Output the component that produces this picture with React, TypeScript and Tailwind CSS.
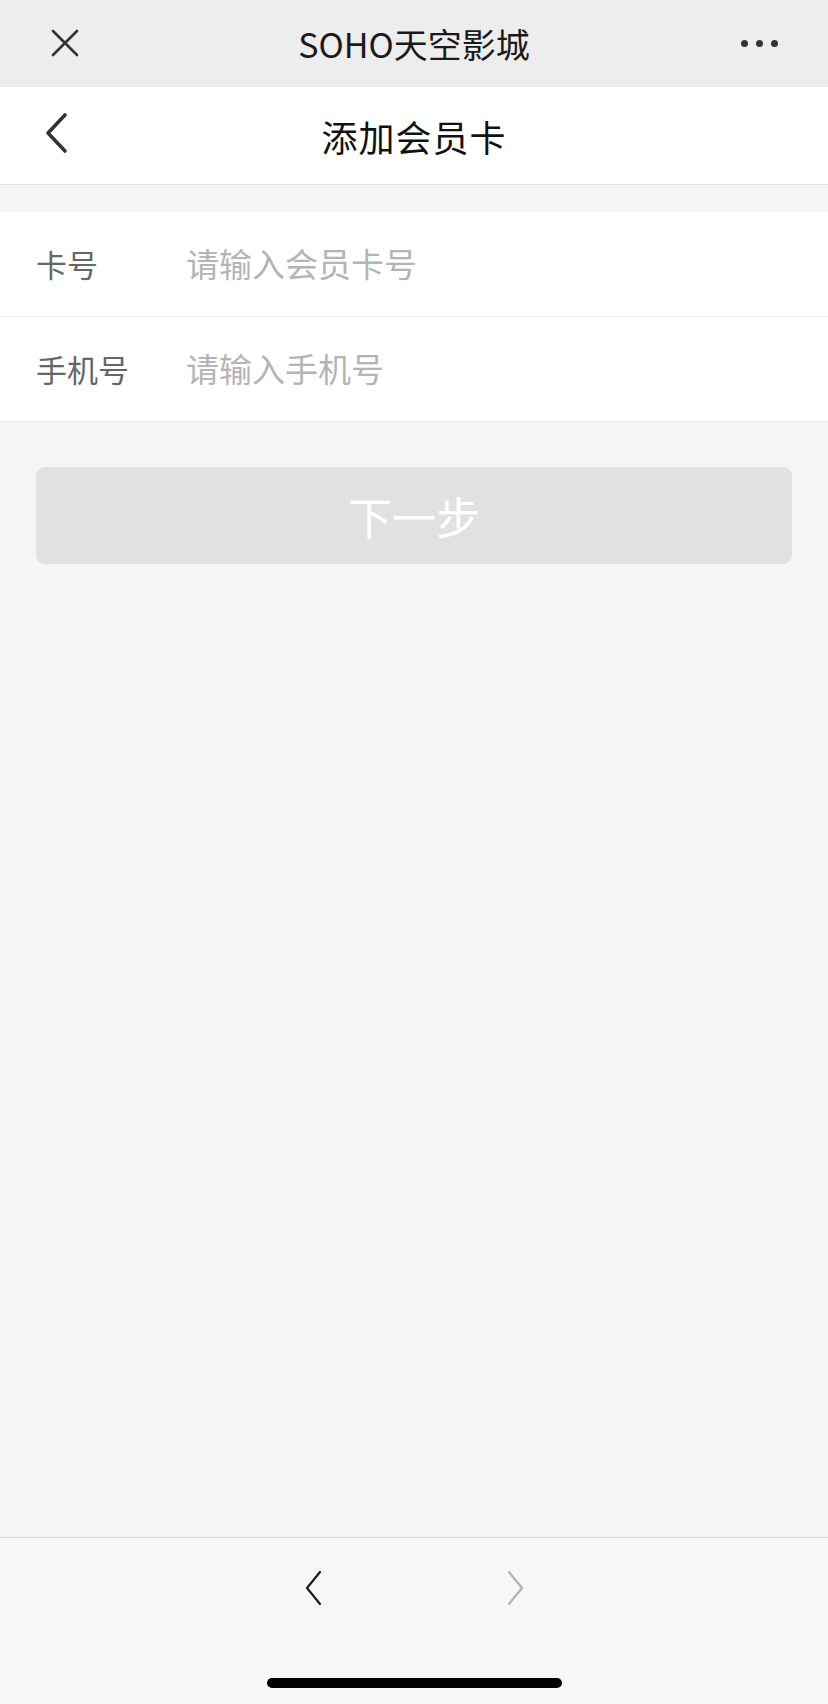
const font = { fontFamily: '"Noto Sans CJK SC", "Noto Sans", sans-serif' };

function Field({ label, placeholder }: { label: string; placeholder: string }) {
  return (
    <div className="flex items-center h-[105px] bg-white border-b border-[#ececec]">
      <span className="shrink-0 w-[186px] pl-[36px] text-[31px] text-[#666666]">{label}</span>
      <input
        className="flex-1 min-w-0 bg-transparent outline-none text-[33px] text-[#333] placeholder:text-[#b4b4b4]"
        placeholder={placeholder}
        style={font}
      />
    </div>
  );
}

export default function App() {
  return (
    <div className="flex flex-col h-[1704px] bg-[#f5f5f5]" style={font}>
      {/* wechat top bar */}
      <div className="relative flex items-center justify-center h-[87px] bg-[#ededed]">
        <svg className="absolute left-[51px] top-[29px]" width="28" height="28" viewBox="0 0 28 28">
          <path d="M2 2 L26 26 M26 2 L2 26" stroke="#333" strokeWidth="2.6" strokeLinecap="round" />
        </svg>
        <span className="text-[34px] leading-none text-[#1a1a1a]">SOHO天空影城</span>
        <div className="absolute right-[50px] top-[40px] flex gap-[8px]">
          <span className="w-[7px] h-[7px] rounded-full bg-[#333]" />
          <span className="w-[7px] h-[7px] rounded-full bg-[#333]" />
          <span className="w-[7px] h-[7px] rounded-full bg-[#333]" />
        </div>
      </div>

      {/* page nav */}
      <div className="relative flex items-center justify-center h-[98px] bg-white border-b border-[#e3e3e3]">
        <svg className="absolute left-[43px] top-[25px]" width="26" height="42" viewBox="0 0 26 42">
          <path d="M22 3 L5 21 L22 39" stroke="#333" strokeWidth="3.6" fill="none" strokeLinecap="round" strokeLinejoin="round" />
        </svg>
        <span className="text-[36px] text-[#111] tracking-[1px]">添加会员卡</span>
      </div>

      <div className="mt-[27px]">
        <Field label="卡号" placeholder="请输入会员卡号" />
        <Field label="手机号" placeholder="请输入手机号" />
      </div>

      <div className="px-[36px] mt-[45px]">
        <button className="w-full h-[97px] rounded-[9px] bg-[#e1e1e1] text-white text-[44px]" style={font}>
          下一步
        </button>
      </div>

      <div className="flex-1" />

      {/* bottom toolbar */}
      <div className="bg-[#f7f7f7] border-t border-[#d9d9d9] h-[167px] flex flex-col">
        <div className="flex items-center justify-center h-[100px] gap-[185px]">
          <svg width="18" height="36" viewBox="0 0 18 36">
            <path d="M16 2 L3 18 L16 34" stroke="#1a1a1a" strokeWidth="2.2" fill="none" strokeLinecap="round" strokeLinejoin="round" />
          </svg>
          <svg width="18" height="36" viewBox="0 0 18 36">
            <path d="M2 2 L15 18 L2 34" stroke="#b2b2b2" strokeWidth="2.2" fill="none" strokeLinecap="round" strokeLinejoin="round" />
          </svg>
        </div>
        <div className="flex justify-center mt-[40px]">
          <div className="w-[295px] h-[10px] rounded-full bg-black" />
        </div>
      </div>
    </div>
  );
}
